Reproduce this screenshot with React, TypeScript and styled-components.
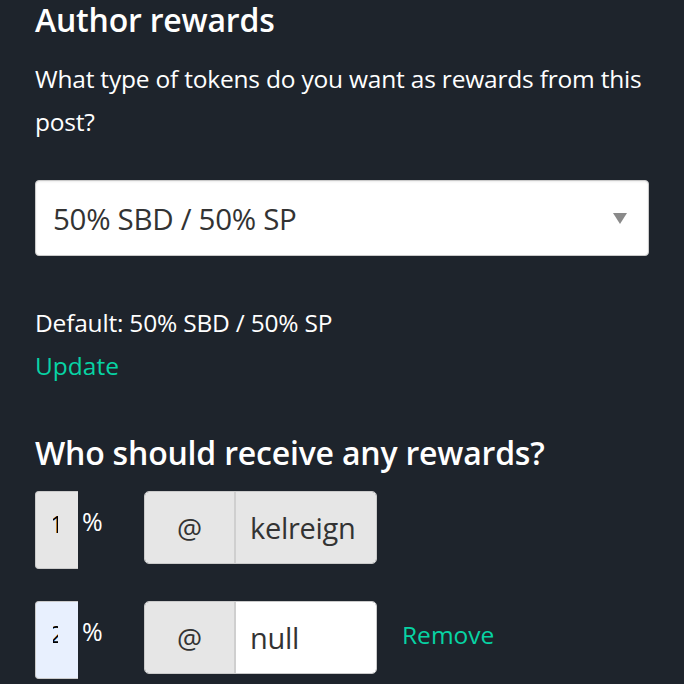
import styled, { createGlobalStyle } from 'styled-components';

const GlobalStyle = createGlobalStyle`
  html, body {
    margin: 0;
    padding: 0;
    background: #1e242c;
  }
  body {
    font-family: 'Open Sans', 'Noto Sans', sans-serif;
    color: #fff;
  }
`;

const Page = styled.div`
  width: 684px;
  height: 684px;
  overflow: hidden;
  padding: 0 35px;
  box-sizing: border-box;
`;

const Heading = styled.h3`
  margin: 0;
  font-size: 32px;
  font-weight: 600;
  line-height: 40px;
  letter-spacing: -0.2px;
`;

const Text = styled.p`
  margin: 0;
  font-size: 24.5px;
  line-height: 43px;
  letter-spacing: -0.2px;
`;

const Intro = styled(Text)`
  margin-top: 17px;
`;

const SelectBox = styled.div`
  display: flex;
  align-items: center;
  justify-content: space-between;
  height: 76px;
  box-sizing: border-box;
  margin: 37px 0 45px;
  padding: 0 21px 0 17px;
  background: #fff;
  border: 1px solid #cacaca;
  border-radius: 4px;
  box-shadow: inset 0 1px 2px rgba(0, 0, 0, 0.08);
  color: #333;
  font-size: 29.5px;
  letter-spacing: -0.3px;
`;

const Caret = styled.span`
  width: 0;
  height: 0;
  border-left: 7px solid transparent;
  border-right: 7px solid transparent;
  border-top: 11px solid #8a8a8a;
`;

const Link = styled.a`
  display: block;
  color: #07d3a4;
  font-size: 24.5px;
  line-height: 43px;
  cursor: pointer;
`;

const SectionHeading = styled(Heading)`
  margin-top: 46px;
`;

const BeneRow = styled.div<{ $first?: boolean }>`
  display: flex;
  align-items: flex-start;
  margin-top: ${(p) => (p.$first ? '18px' : '32px')};
`;

const PercentInput = styled.div<{ $autofill?: boolean }>`
  width: 43px;
  height: 78px;
  box-sizing: border-box;
  border: 1px solid #cacaca;
  border-right: none;
  border-radius: 4px 0 0 4px;
  background: ${(p) => (p.$autofill ? '#e8f0fe' : '#e6e6e6')};
  padding: 19px 0 0 17px;
`;

/* the number is scrolled out of the narrow field, only a sliver shows */
const DigitWindow = styled.span`
  display: block;
  width: 5px;
  height: 26px;
  overflow: hidden;
  color: #000;
  font-size: 24px;
  line-height: 26px;
  text-indent: -3px;
`;

const Pct = styled.span`
  width: 66px;
  box-sizing: border-box;
  padding: 13px 0 0 4px;
  font-size: 25px;
`;

const Group = styled.div`
  display: flex;
  width: 233px;
  height: 73px;
  box-sizing: border-box;
  border: 1px solid #cacaca;
  border-radius: 5px;
  overflow: hidden;
  font-size: 29px;
  letter-spacing: -0.3px;
`;

const Addon = styled.span`
  width: 91px;
  flex-shrink: 0;
  box-sizing: border-box;
  display: flex;
  align-items: center;
  justify-content: center;
  background: #e6e6e6;
  border-right: 2px solid #cfcfcf;
  color: #333;
  font-size: 28px;
`;

const Field = styled.span<{ $disabled?: boolean }>`
  flex: 1;
  display: flex;
  align-items: center;
  padding-left: 14px;
  background: ${(p) => (p.$disabled ? '#e6e6e6' : '#fff')};
  color: #333;
`;

const RemoveLink = styled(Link)`
  margin: 12px 0 0 25px;
`;

export default function App() {
  return (
    <>
      <GlobalStyle />
      <Page>
        <Heading>Author rewards</Heading>
        <Intro>What type of tokens do you want as rewards from this post?</Intro>
        <SelectBox>
          <span>50% SBD / 50% SP</span>
          <Caret />
        </SelectBox>
        <Text>Default: 50% SBD / 50% SP</Text>
        <Link>Update</Link>
        <SectionHeading>Who should receive any rewards?</SectionHeading>
        <BeneRow $first>
          <PercentInput>
            <DigitWindow>1</DigitWindow>
          </PercentInput>
          <Pct>%</Pct>
          <Group>
            <Addon>@</Addon>
            <Field $disabled>kelreign</Field>
          </Group>
        </BeneRow>
        <BeneRow>
          <PercentInput $autofill>
            <DigitWindow>2</DigitWindow>
          </PercentInput>
          <Pct>%</Pct>
          <Group>
            <Addon>@</Addon>
            <Field>null</Field>
          </Group>
          <RemoveLink>Remove</RemoveLink>
        </BeneRow>
      </Page>
    </>
  );
}
